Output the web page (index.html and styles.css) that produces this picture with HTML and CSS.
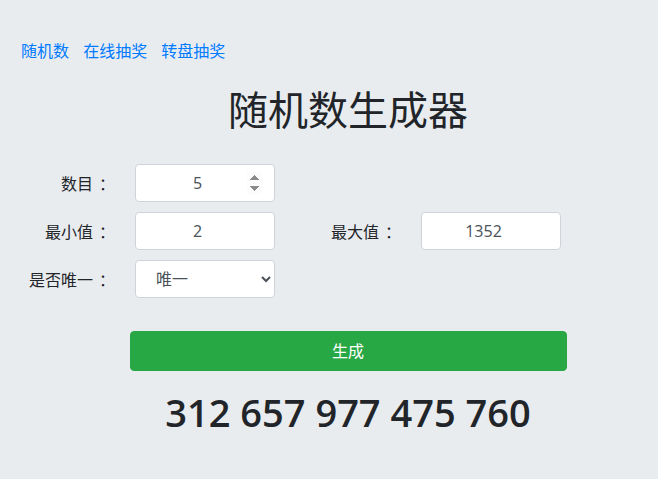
FILE: index.html
```html
<!DOCTYPE html>
<html lang="zh-CN">
<head>
  <meta charset="UTF-8">
  <meta name="viewport" content="width=device-width, initial-scale=1.0">
  <title>随机数生成器</title>
  <link rel="stylesheet" href="styles.css">
</head>
<body>
<div class="page">
  <nav class="nav">
    <a href="#">随机数</a>
    <a href="#">在线抽奖</a>
    <a href="#">转盘抽奖</a>
  </nav>

  <h1 class="title">随机数生成器</h1>

  <form class="form" id="rForm">
    <label class="lbl" for="count">数目<span class="colon">：</span></label>
    <input class="inp spin" type="number" id="count" value="5">
    <span></span>
    <span></span>

    <label class="lbl" for="min">最小值<span class="colon">：</span></label>
    <input class="inp" type="number" id="min" value="2">
    <label class="lbl" for="max">最大值<span class="colon">：</span></label>
    <input class="inp" type="number" id="max" value="1352">

    <label class="lbl" for="uniq">是否唯一<span class="colon">：</span></label>
    <select class="inp sel" id="uniq">
      <option>唯一</option>
      <option>不唯一</option>
    </select>
  </form>

  <button class="btn" type="button">生成</button>

  <div class="result">312 657 977 475 760</div>
</div>
</body>
</html>
```

FILE: styles.css
```css
* {
  box-sizing: border-box;
}

html, body {
  margin: 0;
  padding: 0;
  overflow: hidden;
}

body {
  background-color: #e9ecef;
  color: #212529;
  font-family: "Open Sans", "Noto Sans CJK SC", sans-serif;
  font-size: 16px;
  line-height: 24px;
}

.page {
  width: 656px;
  margin-left: 20px;
  padding-top: 39px;
}

.nav {
  padding-left: 1px;
}

.nav a {
  color: #007bff;
  text-decoration: none;
  margin-right: 10px;
}

.title {
  margin: 23px 0 30px;
  text-align: center;
  font-size: 40px;
  line-height: 48px;
  font-weight: 400;
}

.form {
  display: grid;
  grid-template-columns: 87px 140px 92px 140px;
  column-gap: 27px;
  row-gap: 10px;
  align-items: center;
  padding-left: 1px;
}

.lbl {
  text-align: right;
  white-space: nowrap;
  font-family: "Noto Sans CJK SC", sans-serif;
}

.colon {
  margin-left: 6px;
  margin-right: -7px;
}

.inp {
  height: 38px;
  width: 140px;
  padding: 6px 12px;
  font: inherit;
  color: #495057;
  background-color: #fff;
  border: 1px solid #ced4da;
  border-radius: 4px;
  text-align: center;
}

.sel {
  text-align: left;
  padding-left: 16px;
}

.spin::-webkit-inner-spin-button {
  opacity: 1;
}

.btn {
  display: block;
  width: 437px;
  height: 40px;
  margin: 33px auto 0;
  font: inherit;
  color: #fff;
  background-color: #28a745;
  border: 1px solid #28a745;
  border-radius: 4px;
}

.result {
  margin-top: 17px;
  text-align: center;
  font-size: 38px;
  line-height: 48px;
  font-weight: 600;
}
```
